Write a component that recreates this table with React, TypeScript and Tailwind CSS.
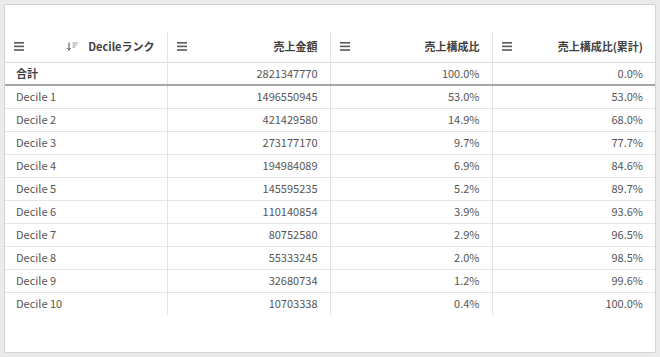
import React from 'react';

interface Row {
  label: string;
  sales: string;
  ratio: string;
  cumulative: string;
}

const rows: Row[] = [
  { label: 'Decile 1', sales: '1496550945', ratio: '53.0%', cumulative: '53.0%' },
  { label: 'Decile 2', sales: '421429580', ratio: '14.9%', cumulative: '68.0%' },
  { label: 'Decile 3', sales: '273177170', ratio: '9.7%', cumulative: '77.7%' },
  { label: 'Decile 4', sales: '194984089', ratio: '6.9%', cumulative: '84.6%' },
  { label: 'Decile 5', sales: '145595235', ratio: '5.2%', cumulative: '89.7%' },
  { label: 'Decile 6', sales: '110140854', ratio: '3.9%', cumulative: '93.6%' },
  { label: 'Decile 7', sales: '80752580', ratio: '2.9%', cumulative: '96.5%' },
  { label: 'Decile 8', sales: '55333245', ratio: '2.0%', cumulative: '98.5%' },
  { label: 'Decile 9', sales: '32680734', ratio: '1.2%', cumulative: '99.6%' },
  { label: 'Decile 10', sales: '10703338', ratio: '0.4%', cumulative: '100.0%' },
];

const MenuIcon = () => (
  <svg width="11" height="9" viewBox="0 0 11 9" className="shrink-0">
    <rect x="0" y="0" width="10" height="1.6" fill="#595959" />
    <rect x="0" y="3.6" width="10" height="1.6" fill="#595959" />
    <rect x="0" y="7.2" width="10" height="1.6" fill="#595959" />
  </svg>
);

const SortIcon = () => (
  <svg width="12" height="9" viewBox="0 0 12 9" className="shrink-0">
    <path d="M2 0.5 V8" stroke="#595959" strokeWidth="1.1" />
    <path d="M0.3 6 L2 8.3 L3.7 6" stroke="#595959" strokeWidth="1" fill="none" />
    <rect x="5.5" y="0.5" width="5.5" height="1" fill="#9a9a9a" />
    <rect x="5.5" y="2.6" width="4.2" height="1" fill="#9a9a9a" />
    <rect x="5.5" y="4.7" width="2.8" height="1" fill="#9a9a9a" />
  </svg>
);

const HeaderCell = ({ label, sort, last }: { label: string; sort?: boolean; last?: boolean }) => (
  <th className={`h-[30px] p-0 font-bold text-[#404040] ${last ? '' : 'border-r border-[#e3e3e3]'}`}>
    <div className="flex items-center pl-[9px] pr-[12px]">
      <MenuIcon />
      <div className="flex-1" />
      {sort && (
        <span className="mr-[9px] flex items-center">
          <SortIcon />
        </span>
      )}
      <span>{label}</span>
    </div>
  </th>
);

const App = () => {
  return (
    <div
      className="w-[660px] h-[357px] bg-[#ebebeb] p-[4px] text-[11px] text-[#555555]"
      style={{ fontFamily: '"Noto Sans CJK JP", "Open Sans", sans-serif' }}
    >
      <div className="h-[349px] bg-white border border-[#d3d3d3] rounded-[2px] pt-[27px] pr-[1px]">
        <table className="w-[650px] table-fixed border-collapse leading-none">
          <colgroup>
            <col className="w-[162px]" />
            <col className="w-[163px]" />
            <col className="w-[162px]" />
            <col className="w-[163px]" />
          </colgroup>
          <thead>
            <tr className="border-b border-[#dcdcdc]">
              <HeaderCell label="Decileランク" sort />
              <HeaderCell label="売上金額" />
              <HeaderCell label="売上構成比" />
              <HeaderCell label="売上構成比(累計)" last />
            </tr>
          </thead>
          <tbody>
            <tr className="h-[23px] border-b-2 border-[#a6a6a6]">
              <td className="pl-[11px] font-bold text-[#404040] border-r border-[#e3e3e3]">合計</td>
              <td className="pr-[12px] text-right border-r border-[#e3e3e3]">2821347770</td>
              <td className="pr-[12px] text-right border-r border-[#e3e3e3]">100.0%</td>
              <td className="pr-[12px] text-right">0.0%</td>
            </tr>
            {rows.map((row, i) => (
              <tr
                key={row.label}
                className={`h-[23px] ${i < rows.length - 1 ? 'border-b border-[#e6e6e6]' : ''}`}
              >
                <td className="pl-[11px] border-r border-[#e3e3e3]">{row.label}</td>
                <td className="pr-[12px] text-right border-r border-[#e3e3e3]">{row.sales}</td>
                <td className="pr-[12px] text-right border-r border-[#e3e3e3]">{row.ratio}</td>
                <td className="pr-[12px] text-right">{row.cumulative}</td>
              </tr>
            ))}
          </tbody>
        </table>
      </div>
    </div>
  );
};

export default App;
